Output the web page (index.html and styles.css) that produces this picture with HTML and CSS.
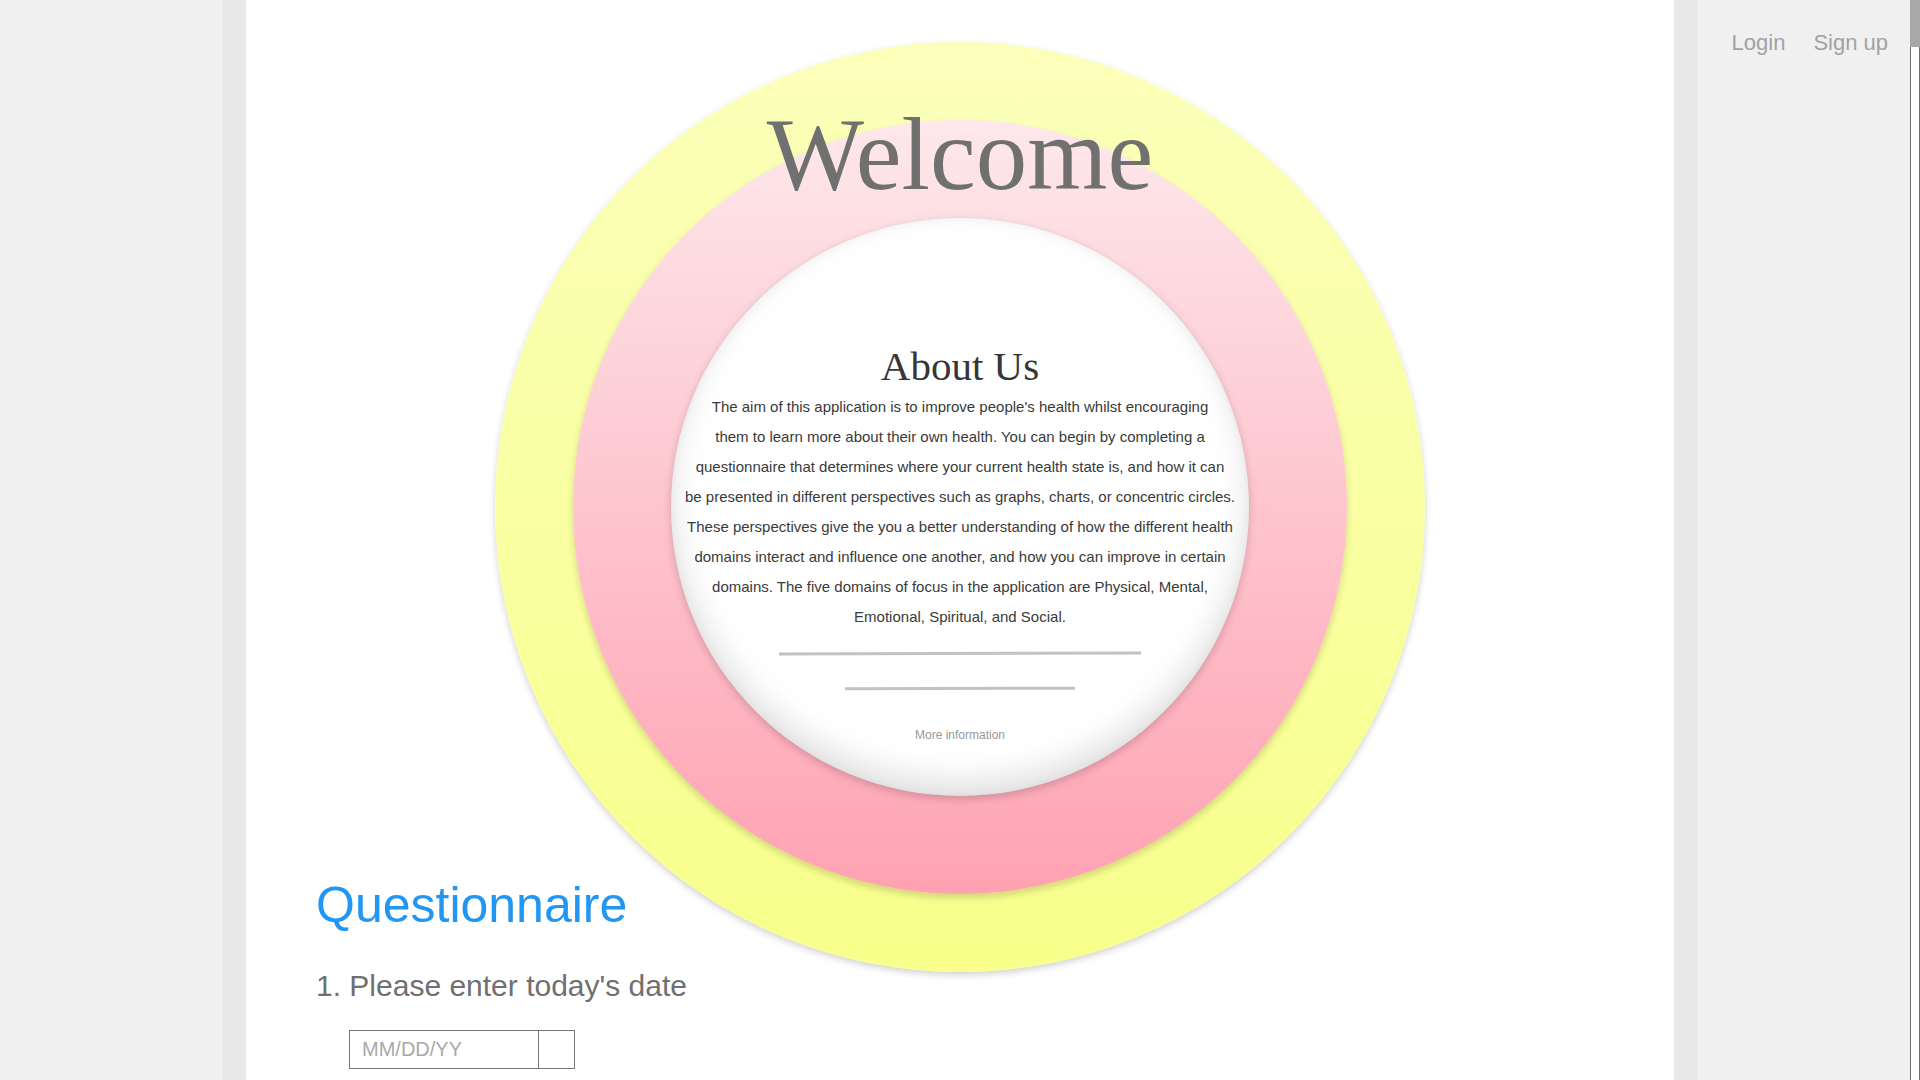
FILE: index.html
```html
<!DOCTYPE html>
<html lang="en">
<head>
<meta charset="utf-8">
<title>Welcome</title>
<link rel="stylesheet" href="styles.css">
</head>
<body>
<div class="layout">
  <aside class="side-left"></aside>
  <main class="main">
    <section class="hero">
      <div class="ring ring-outer">
        <div class="ring ring-middle">
          <div class="ring-inner">
            <h2 class="about-title">About Us</h2>
            <p class="about-text">The aim of this application is to improve people's health whilst encouraging<br>
them to learn more about their own health. You can begin by completing a<br>
questionnaire that determines where your current health state is, and how it can<br>
be presented in different perspectives such as graphs, charts, or concentric circles.<br>
These perspectives give the you a better understanding of how the different health<br>
domains interact and influence one another, and how you can improve in certain<br>
domains. The five domains of focus in the application are Physical, Mental,<br>
Emotional, Spiritual, and Social.</p>
            <hr class="rule rule-long">
            <hr class="rule rule-short">
            <a class="more-link" href="#">More information</a>
          </div>
        </div>
        <h1 class="welcome">Welcome</h1>
      </div>
    </section>
    <section class="questionnaire">
      <h2 class="q-title">Questionnaire</h2>
      <div class="question">
        <label class="q-label" for="date">1. Please enter today's date</label>
        <div class="date-field">
          <input id="date" class="date-input" type="text" placeholder="MM/DD/YY">
          <button class="date-btn" type="button" aria-label="Pick date"></button>
        </div>
      </div>
    </section>
  </main>
  <aside class="side-right">
    <nav class="auth-nav">
      <a class="auth-link" href="#">Login</a>
      <a class="auth-link" href="#">Sign up</a>
    </nav>
    <div class="scrollbar" aria-hidden="true"><div class="scrollbar-thumb"></div></div>
  </aside>
</div>
</body>
</html>
```
FILE: styles.css
```css
html, body {
  margin: 0;
  padding: 0;
}

body {
  background: #f0f0f0;
  font-family: "Liberation Sans", Arial, sans-serif;
  overflow-x: hidden;
}

.layout {
  display: grid;
  grid-template-columns: 222px 1476px 1fr;
  min-height: 100vh;
}

.side-left {
  background: #f0f0f0;
}

.main {
  background: #ffffff;
  border-left: 24px solid #e8e8e8;
  border-right: 24px solid #e8e8e8;
  min-width: 0;
  padding-bottom: 60px;
}

.side-right {
  background: #f0f0f0;
  display: grid;
  grid-template-columns: 1fr 10px;
}

.auth-nav {
  display: flex;
  justify-content: flex-end;
  align-items: flex-start;
  gap: 28px;
  padding: 30px 22px 0 0;
}

.auth-link {
  font-size: 22px;
  color: #a2a2a2;
  text-decoration: none;
}

.scrollbar {
  box-sizing: border-box;
  background: #ffffff;
  border-left: 1px solid #6e6e6e;
  border-right: 1px solid #6e6e6e;
}

.scrollbar-thumb {
  height: 47px;
  margin: 0 -1px;
  background: #a8a8a8;
}

/* Hero rings */
.hero {
  height: 834px;
  padding-top: 42px;
  display: flex;
  justify-content: center;
}

.ring {
  border-radius: 50%;
  display: grid;
  place-items: center;
  flex-shrink: 0;
}

.ring-outer {
  width: 930px;
  height: 930px;
  background: linear-gradient(to bottom, #fbffbb, #f8ff8a);
  box-shadow: 0 3px 7px rgba(0, 0, 0, 0.18);
}

.ring-outer > * {
  grid-area: 1 / 1;
}

.ring-middle {
  width: 774px;
  height: 774px;
  background: linear-gradient(to bottom, #fde8eb, #ffa2b2);
  box-shadow: 0 4px 7px rgba(0, 0, 0, 0.16);
}

.welcome {
  align-self: start;
  margin: 62px 0 0;
  font-family: "Liberation Serif", "Times New Roman", serif;
  font-weight: normal;
  font-size: 103px;
  line-height: 100px;
  color: #707070;
}

.ring-inner {
  width: 578px;
  height: 578px;
  box-sizing: border-box;
  border-radius: 50%;
  background: #ffffff;
  box-shadow: inset 0 -14px 32px rgba(0, 0, 0, 0.13), inset 0 0 10px rgba(0, 0, 0, 0.04), 0 3px 8px rgba(0, 0, 0, 0.18);
  display: flex;
  flex-direction: column;
  align-items: center;
  padding-top: 131px;
}

.about-title {
  margin: 0;
  font-family: "Liberation Serif", "Times New Roman", serif;
  font-weight: normal;
  font-size: 41px;
  line-height: 34px;
  color: #363636;
}

.about-text {
  margin: 9px 0 0;
  width: 570px;
  text-align: center;
  font-size: 15px;
  line-height: 30px;
  color: #3a3a3a;
}

.rule {
  border: none;
  height: 3px;
  background: #c2c2c2;
  margin: 0;
  transform: rotate(-0.15deg);
}

.rule-long {
  width: 362px;
  margin-top: 20px;
}

.rule-short {
  width: 230px;
  margin-top: 32px;
}

.more-link {
  margin-top: 38px;
  font-size: 12px;
  color: #999999;
  text-decoration: none;
}

/* Questionnaire */
.questionnaire {
  padding-left: 70px;
}

.q-title {
  margin: 0;
  font-size: 50px;
  font-weight: normal;
  color: #2196f3;
}

.question {
  display: flex;
  flex-direction: column;
  align-items: flex-start;
}

.q-label {
  margin-top: 35px;
  font-size: 30px;
  color: #707070;
}

.date-field {
  display: flex;
  margin: 27px 0 0 33px;
}

.date-input {
  width: 190px;
  height: 39px;
  box-sizing: border-box;
  border: 1px solid #767676;
  padding: 0 12px;
  font-family: "Liberation Sans", Arial, sans-serif;
  font-size: 20px;
  color: #555;
  outline: none;
}

.date-input::placeholder {
  color: #a9a9a9;
}

.date-btn {
  width: 36px;
  height: 39px;
  box-sizing: border-box;
  border: 1px solid #767676;
  border-left: none;
  background: #ffffff;
  padding: 0;
}
```
